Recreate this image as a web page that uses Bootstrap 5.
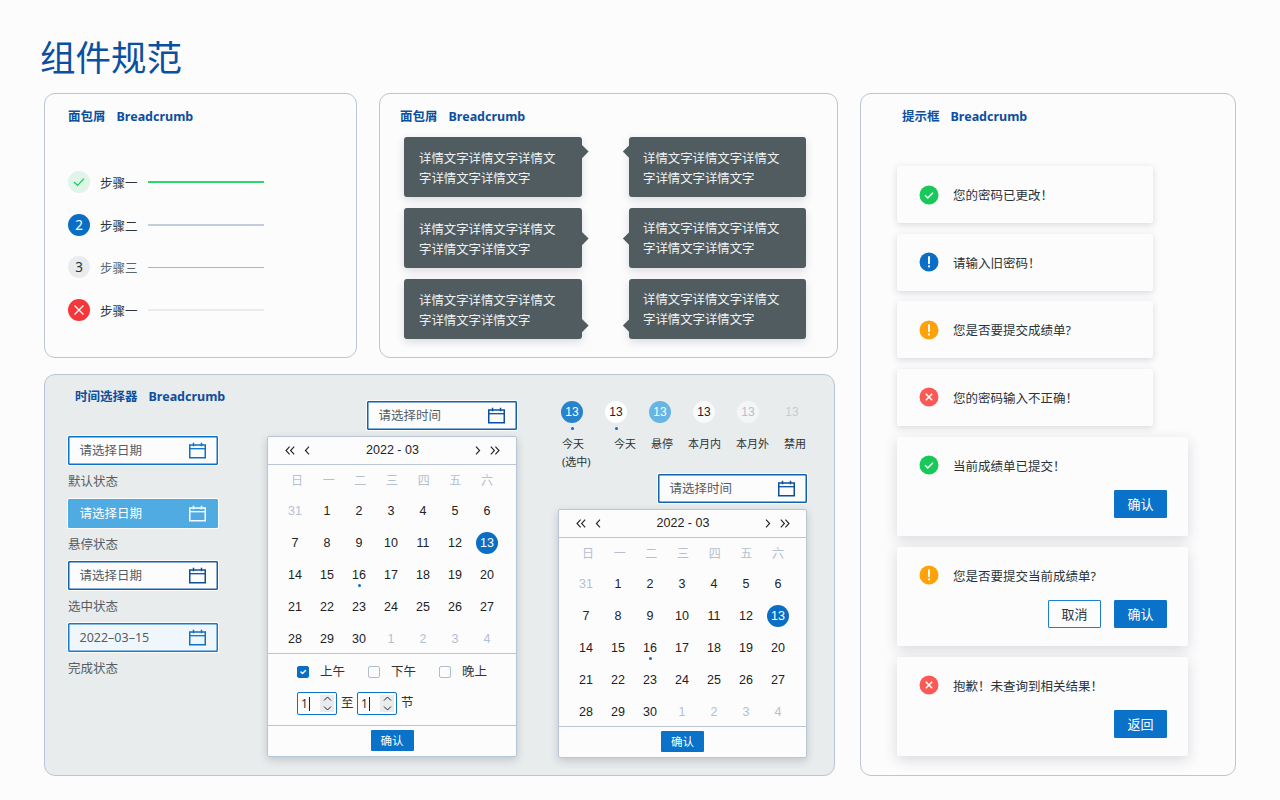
<!DOCTYPE html>
<html lang="zh-CN">
<head>
<meta charset="utf-8">
<title>组件规范</title>
<link href="https://cdn.jsdelivr.net/npm/bootstrap@5.3.0/dist/css/bootstrap.min.css" rel="stylesheet">
<style>
html,body{height:800px;overflow:hidden}
body{background:#fcfcfd;font-family:"Noto Sans","Noto Sans CJK SC",sans-serif;color:#2b3338;font-size:12.5px;width:1280px}
.page-wrap{padding:32px 0 0 44px}
.page-title{font-size:35.5px;font-weight:400;line-height:50px;color:#0b509e;margin:0 0 11px -4px}
.spec-card{border:1px solid #b8c6d8;border-radius:11px;background:#fcfcfd}
.left-side{width:794px;margin-right:22px}
.c-steps{width:313px;height:265px;padding:13px 0 0 23px;margin-right:22px}
.c-tips{width:459px;height:265px;padding:13px 0 0 20px}
.c-date{width:791px;height:402px;margin-top:16px;background:#e9eced;padding:0 0 0 23px}
.c-msg{width:376px;height:683px;padding:13px 0 0 36px}
.sec-title{font-size:12.5px;font-weight:700;line-height:20px;color:#0b4f9e;white-space:nowrap}
.sec-title span{margin-right:11px}
.step-list{margin-top:33.67px}
.step-row{height:42.67px;display:flex;align-items:center}
.step-dot{width:22px;height:22px;border-radius:50%;display:flex;align-items:center;justify-content:center;font-size:13.5px;margin-right:10px;flex:none}
.dot-done{background:#dff5e8}
.dot-now{background:#0a6fc4;color:#fff}
.dot-wait{background:#e9ecee}
.dot-fail{background:#f5373c}
.step-name{width:38px;margin-right:10px;line-height:22px;white-space:nowrap;padding-top:4px}
.name-wait{color:#5a666c}
.step-line{width:116px;height:2px}
.line-done{background:#2bd66c}
.line-now{background:#c2cedc}
.line-wait{background:#aab6c2;height:1px}
.line-fail{background:#e8ebef}
.tip-grid{display:grid;grid-template-columns:178px 177px;column-gap:47px;row-gap:11px;margin:10px 0 0 4px}
.tip-box{position:relative;height:60px;background:#505c60;color:#eef1f2;border-radius:3px;padding:11.5px 15px 0;line-height:20px;font-size:12.4px;box-shadow:0 3px 8px rgba(40,50,60,.16)}
.tip-box::after{content:"";position:absolute;width:8.5px;height:8.5px;background:#505c60;transform:rotate(45deg)}
.arr-r::after{right:-4.5px}
.arr-l{padding-left:14px}
.arr-l.arr-b,.arr-l.arr-c{padding-top:10.5px}
.arr-l::after{left:-4.5px}
.arr-a::after{top:10px}
.arr-b::after{top:26px}
.arr-c::after{top:42px}
.col-a{width:150px;margin-right:49px;padding-top:12px}
.col-b{width:250px;margin-right:41px;padding-top:26px}
.col-c{width:249px;padding-top:26px}
.date-head{margin:0 0 29px 7px}
.date-in{--bd:#0a72c8;height:29px;width:150px;border:1px solid var(--bd);box-shadow:inset 0 0 0 .5px var(--bd),0 0 0 1px rgba(255,255,255,.85);background:#fcfcfd;display:flex;align-items:center;justify-content:space-between;padding:1px 11.5px 0 10.5px;color:#555e64;border-radius:1px}
.date-in svg{flex:none;margin-top:-1px}
.in-hover{--bd:#4fabe2;background:#4fabe2;color:#fff}
.in-sel{--bd:#1262ab}
.in-done{--bd:#1a79c9;background:#f0f7fc}
.in-cap{height:33px;line-height:33px;color:#555e64}
.in-cap-tall{height:34px}
.w-narrow{width:149px}
.cal-panel{background:#fcfcfd;border:1px solid #b9c6d6;border-radius:2px;box-shadow:0 3px 8px rgba(40,50,60,.2);margin-top:6px}
.cal-head{height:28px;border-bottom:1px solid #b9c6d6;display:flex;align-items:center;padding:0 16px 0 17px;color:#222;font-size:12.5px}
.cal-head .cal-ym{flex:1;text-align:center;font-family:"Liberation Sans",sans-serif;font-size:12.5px}
.cal-head svg{flex:none}
.nav-gap{margin-right:9px}
.nav-gap2{margin-left:9px}
.cal-week{display:grid;grid-template-columns:repeat(7,31.67px);height:30px;padding-left:13.2px;color:#b4c1cf;font-family:"Noto Sans CJK SC",sans-serif;font-size:12px}
.cal-week>div{display:flex;align-items:center;justify-content:center}
.cal-days{display:grid;grid-template-columns:repeat(7,32px);grid-auto-rows:32px;padding:0 0 0 11px;height:158px}
.cal-days>div{display:flex;align-items:center;justify-content:center;position:relative;font-family:"Liberation Sans","Noto Sans CJK SC",sans-serif;font-size:12.5px;color:#222;padding-top:1px}
.cal-days>.off{color:#b4c1cf}
.cal-days>.cur{color:#fff}
.cal-days>.cur::before{content:"";position:absolute;left:5px;top:5px;width:22px;height:22px;border-radius:50%;background:#0a6fc4;z-index:0}
.cal-days>.cur span{position:relative}
.mark-dot::after{content:"";position:absolute;left:14.5px;top:25px;width:3px;height:3px;border-radius:50%;background:#0a6fc4}
.cal-time{border-top:1px solid #b9c6d6;height:72px;padding:0 0 0 29px}
.time-opts{height:36px;display:flex;align-items:center}
.time-opts .form-check-input{width:12px;height:12px;margin:0 11px 0 0;border:1.5px solid #aebccb;border-radius:2px;background-color:#fcfcfd;flex:none}
.time-opts .form-check-input:checked{background-color:#0a6fc4;border-color:#0a6fc4}
.time-opts label{width:48px;color:#333}
.time-range{display:flex;align-items:center;color:#333;margin-top:2px;height:23px}
.spin{width:40px;height:23px;border:1px solid #0a72c8;border-radius:2px;background:#fcfcfd;display:flex;align-items:center;justify-content:space-between;padding:0 2px 0 3px;font-size:12px}
.spin-txt{border-right:1px solid #222;line-height:13px;padding-right:1px;height:14px;display:block}
.spin-btn{width:14px;height:17px;background:#e9ecee;display:flex;flex-direction:column;align-items:center;justify-content:space-between;padding:1px 0}
.range-word{margin:0 4px;width:12px;white-space:nowrap}
.cal-foot{border-top:1px solid #b9c6d6;height:31px;display:flex;align-items:center;justify-content:center;padding-bottom:1px}
.btn-mini{width:43px;height:21px;padding:0;background:#0a72c8;border:0;border-radius:1px;color:#fff;font-size:11.5px;line-height:21px}
.state-dots{display:flex;margin-left:3px}
.state-dots>div{width:22px;height:22px;margin-right:22px;border-radius:50%;display:flex;align-items:center;justify-content:center;font-family:"Liberation Sans",sans-serif;font-size:12px;position:relative;flex:none}
.sd-today{background:#2683cc;color:#fff}
.sd-white{background:#fff;color:#222}
.sd-hover{background:#67b5e3;color:#fff}
.sd-in{background:#f8f9fa;color:#222}
.sd-out{background:#f3f5f6;color:#b4c1cf}
.sd-off{color:#c2cdd8}
.has-dot::after{content:"";position:absolute;left:9.5px;top:26px;width:3px;height:3px;border-radius:50%;background:#1762e0}
.state-names{display:flex;margin:12px 0 0 4px;line-height:18px;font-size:11px;gap:15px;color:#2b3338;height:35px;white-space:nowrap}
.sn-w{width:37px}
.input-right{margin-left:auto}
.mt-4px{margin-top:4px}
.toast-box{background:#fcfcfd;border-radius:2px;padding:0 0 0 22px;color:#2b3338;font-size:12.5px;margin-bottom:10.67px}
.t-s{width:256px;height:57px;display:flex;align-items:center;box-shadow:0 2px 7px rgba(40,50,60,.17)}
.t-w{width:291px;height:99px;box-shadow:0 4px 14px rgba(40,50,60,.17);padding-top:18px;margin-bottom:11px}
.t-row{display:flex;align-items:center;height:20px}
.t-txt{padding-top:4px}
.t-w .t-txt{padding-top:5px}
.toast-box svg{flex:none;margin-right:14px}
.msg-list{margin-top:39px}
.msg-head{margin-left:5px}
.t-acts{display:flex;justify-content:flex-end;gap:13px;margin:15px 21px 0 0}
.btn-act{width:53px;height:28px;padding:0;font-size:13px;line-height:26px;border-radius:1px;background:#0a72c8;color:#fff;border:1px solid #0a72c8}
.btn-ghost{background:#fcfcfd;color:#2b3338;border-color:#1c80cf}
.ic-blue{color:#0a72c8}
.ic-navy{color:#0b4f9e}
</style>
</head>
<body>
<svg width="0" height="0" class="d-block position-absolute">
  <defs>
    <symbol id="ic-cal" viewBox="0 0 17 17">
      <path d="M.75 3h15.5v12.75H.75z" fill="none" stroke="currentColor" stroke-width="1.5"/>
      <path d="M1 6.7h15" stroke="currentColor" stroke-width="1.3"/>
      <path d="M4.5.8v3.4M12.5.8v3.4" stroke="currentColor" stroke-width="1.5"/>
    </symbol>
    <symbol id="ic-ok" viewBox="0 0 20 20"><circle cx="10" cy="10" r="9.5" fill="#18c95a"/><path d="M6 10.3l2.8 2.7L14 7.8" fill="none" stroke="#fff" stroke-width="1.5"/></symbol>
    <symbol id="ic-info" viewBox="0 0 20 20"><circle cx="10" cy="10" r="9.5" fill="#0a6fc4"/><path d="M10 5v6.3" stroke="#fff" stroke-width="1.9" stroke-linecap="round"/><circle cx="10" cy="14.4" r="1.1" fill="#fff"/></symbol>
    <symbol id="ic-warn" viewBox="0 0 20 20"><circle cx="10" cy="10" r="9.5" fill="#ffa20a"/><path d="M10 5v6.3" stroke="#fff" stroke-width="1.9" stroke-linecap="round"/><circle cx="10" cy="14.4" r="1.1" fill="#fff"/></symbol>
    <symbol id="ic-err" viewBox="0 0 20 20"><circle cx="10" cy="10" r="9.5" fill="#f95a55"/><path d="M6.8 6.8l6.4 6.4M13.2 6.8l-6.4 6.4" stroke="#fff" stroke-width="1.5"/></symbol>
    <symbol id="ic-l2" viewBox="0 0 10 9"><path d="M4.6.7L1 4.5l3.6 3.8M9.2.7L5.6 4.5l3.6 3.8" fill="none" stroke="currentColor" stroke-width="1.1"/></symbol>
    <symbol id="ic-l1" viewBox="0 0 6 9"><path d="M5 .7L1.4 4.5 5 8.3" fill="none" stroke="currentColor" stroke-width="1.1"/></symbol>
    <symbol id="ic-r1" viewBox="0 0 6 9"><path d="M1 .7l3.6 3.8L1 8.3" fill="none" stroke="currentColor" stroke-width="1.1"/></symbol>
    <symbol id="ic-r2" viewBox="0 0 10 9"><path d="M.8.7l3.6 3.8L.8 8.3M5.4.7L9 4.5 5.4 8.3" fill="none" stroke="currentColor" stroke-width="1.1"/></symbol>
    <symbol id="ic-up" viewBox="0 0 9 5"><path d="M1 4.5L4.5 1 8 4.5" fill="none" stroke="#222" stroke-width="1"/></symbol>
    <symbol id="ic-dn" viewBox="0 0 9 5"><path d="M1 .5L4.5 4 8 .5" fill="none" stroke="#222" stroke-width="1"/></symbol>
  </defs>
</svg>

<div class="page-wrap">
  <h1 class="page-title">组件规范</h1>
  <div class="d-flex align-items-start">
    <div class="left-side">
      <div class="d-flex">
        <section class="spec-card c-steps">
          <div class="sec-title"><span>面包屑</span>Breadcrumb</div>
          <div class="step-list">
            <div class="step-row">
              <div class="step-dot dot-done"><svg width="12" height="10" viewBox="0 0 12 10"><path d="M1 5l3.6 3.4L11 1.6" fill="none" stroke="#18c95a" stroke-width="1.2"/></svg></div>
              <div class="step-name">步骤一</div><div class="step-line line-done"></div>
            </div>
            <div class="step-row">
              <div class="step-dot dot-now">2</div>
              <div class="step-name">步骤二</div><div class="step-line line-now"></div>
            </div>
            <div class="step-row">
              <div class="step-dot dot-wait">3</div>
              <div class="step-name name-wait">步骤三</div><div class="step-line line-wait"></div>
            </div>
            <div class="step-row">
              <div class="step-dot dot-fail"><svg width="12" height="12" viewBox="0 0 12 12"><path d="M1.5 1.5l9 9M10.5 1.5l-9 9" stroke="#fff" stroke-width="1.3"/></svg></div>
              <div class="step-name">步骤一</div><div class="step-line line-fail"></div>
            </div>
          </div>
        </section>
        <section class="spec-card c-tips">
          <div class="sec-title"><span>面包屑</span>Breadcrumb</div>
          <div class="tip-grid">
            <div class="tip-box arr-r arr-a">详情文字详情文字详情文字详情文字详情文字</div>
            <div class="tip-box arr-l arr-a">详情文字详情文字详情文字详情文字详情文字</div>
            <div class="tip-box arr-r arr-b">详情文字详情文字详情文字详情文字详情文字</div>
            <div class="tip-box arr-l arr-b">详情文字详情文字详情文字详情文字详情文字</div>
            <div class="tip-box arr-r arr-c">详情文字详情文字详情文字详情文字详情文字</div>
            <div class="tip-box arr-l arr-c">详情文字详情文字详情文字详情文字详情文字</div>
          </div>
        </section>
      </div>

      <section class="spec-card c-date d-flex align-items-start">
        <div class="col-a">
          <div class="sec-title date-head"><span>时间选择器</span>Breadcrumb</div>
          <div class="date-in"><span>请选择日期</span><svg class="ic-blue" width="17" height="17"><use href="#ic-cal"/></svg></div>
          <div class="in-cap in-cap-tall">默认状态</div>
          <div class="date-in in-hover"><span>请选择日期</span><svg width="17" height="17"><use href="#ic-cal"/></svg></div>
          <div class="in-cap">悬停状态</div>
          <div class="date-in in-sel"><span>请选择日期</span><svg class="ic-navy" width="17" height="17"><use href="#ic-cal"/></svg></div>
          <div class="in-cap">选中状态</div>
          <div class="date-in in-done"><span>2022–03–15</span><svg class="ic-blue" width="17" height="17"><use href="#ic-cal"/></svg></div>
          <div class="in-cap">完成状态</div>
        </div>

        <div class="col-b">
          <div class="date-in in-sel input-right"><span>请选择时间</span><svg class="ic-navy" width="17" height="17"><use href="#ic-cal"/></svg></div>
          <div class="cal-panel">
            <div class="cal-head">
              <svg class="nav-gap" width="10" height="9"><use href="#ic-l2"/></svg><svg width="6" height="9"><use href="#ic-l1"/></svg>
              <div class="cal-ym">2022 - 03</div>
              <svg width="6" height="9"><use href="#ic-r1"/></svg><svg class="nav-gap2" width="10" height="9"><use href="#ic-r2"/></svg>
            </div>
            <div class="cal-week"><div>日</div><div>一</div><div>二</div><div>三</div><div>四</div><div>五</div><div>六</div></div>
            <div class="cal-days">
              <div class="off">31</div><div>1</div><div>2</div><div>3</div><div>4</div><div>5</div><div>6</div>
              <div>7</div><div>8</div><div>9</div><div>10</div><div>11</div><div>12</div><div class="cur"><span>13</span></div>
              <div>14</div><div>15</div><div class="mark-dot">16</div><div>17</div><div>18</div><div>19</div><div>20</div>
              <div>21</div><div>22</div><div>23</div><div>24</div><div>25</div><div>26</div><div>27</div>
              <div>28</div><div>29</div><div>30</div><div class="off">1</div><div class="off">2</div><div class="off">3</div><div class="off">4</div>
            </div>
            <div class="cal-time">
              <div class="time-opts">
                <input class="form-check-input" type="checkbox" checked id="am"><label for="am">上午</label>
                <input class="form-check-input" type="checkbox" id="pm"><label for="pm">下午</label>
                <input class="form-check-input" type="checkbox" id="eve"><label for="eve">晚上</label>
              </div>
              <div class="time-range">
                <div class="spin"><span class="spin-txt">1</span><span class="spin-btn"><svg width="9" height="5"><use href="#ic-up"/></svg><svg width="9" height="5"><use href="#ic-dn"/></svg></span></div>
                <span class="range-word">至</span>
                <div class="spin"><span class="spin-txt">1</span><span class="spin-btn"><svg width="9" height="5"><use href="#ic-up"/></svg><svg width="9" height="5"><use href="#ic-dn"/></svg></span></div>
                <span class="range-word">节</span>
              </div>
            </div>
            <div class="cal-foot"><button class="btn btn-mini" type="button">确认</button></div>
          </div>
        </div>

        <div class="col-c">
          <div class="state-dots">
            <div class="sd-today has-dot">13</div>
            <div class="sd-white has-dot">13</div>
            <div class="sd-hover">13</div>
            <div class="sd-in">13</div>
            <div class="sd-out">13</div>
            <div class="sd-off">13</div>
          </div>
          <div class="state-names">
            <div class="sn-w">今天<br>(选中)</div>
            <div>今天</div><div>悬停</div><div>本月内</div><div>本月外</div><div>禁用</div>
          </div>
          <div class="date-in in-sel input-right mt-4px w-narrow"><span>请选择时间</span><svg class="ic-navy" width="17" height="17"><use href="#ic-cal"/></svg></div>
          <div class="cal-panel">
            <div class="cal-head">
              <svg class="nav-gap" width="10" height="9"><use href="#ic-l2"/></svg><svg width="6" height="9"><use href="#ic-l1"/></svg>
              <div class="cal-ym">2022 - 03</div>
              <svg width="6" height="9"><use href="#ic-r1"/></svg><svg class="nav-gap2" width="10" height="9"><use href="#ic-r2"/></svg>
            </div>
            <div class="cal-week"><div>日</div><div>一</div><div>二</div><div>三</div><div>四</div><div>五</div><div>六</div></div>
            <div class="cal-days">
              <div class="off">31</div><div>1</div><div>2</div><div>3</div><div>4</div><div>5</div><div>6</div>
              <div>7</div><div>8</div><div>9</div><div>10</div><div>11</div><div>12</div><div class="cur"><span>13</span></div>
              <div>14</div><div>15</div><div class="mark-dot">16</div><div>17</div><div>18</div><div>19</div><div>20</div>
              <div>21</div><div>22</div><div>23</div><div>24</div><div>25</div><div>26</div><div>27</div>
              <div>28</div><div>29</div><div>30</div><div class="off">1</div><div class="off">2</div><div class="off">3</div><div class="off">4</div>
            </div>
            <div class="cal-foot"><button class="btn btn-mini" type="button">确认</button></div>
          </div>
        </div>
      </section>
    </div>

    <section class="spec-card c-msg">
      <div class="sec-title msg-head"><span>提示框</span>Breadcrumb</div>
      <div class="msg-list">
        <div class="toast-box t-s"><svg width="20" height="20"><use href="#ic-ok"/></svg><span class="t-txt">您的密码已更改！</span></div>
        <div class="toast-box t-s"><svg width="20" height="20"><use href="#ic-info"/></svg><span class="t-txt">请输入旧密码！</span></div>
        <div class="toast-box t-s"><svg width="20" height="20"><use href="#ic-warn"/></svg><span class="t-txt">您是否要提交成绩单?</span></div>
        <div class="toast-box t-s"><svg width="20" height="20"><use href="#ic-err"/></svg><span class="t-txt">您的密码输入不正确！</span></div>
        <div class="toast-box t-w">
          <div class="t-row"><svg width="20" height="20"><use href="#ic-ok"/></svg><span class="t-txt">当前成绩单已提交！</span></div>
          <div class="t-acts"><button class="btn btn-act" type="button">确认</button></div>
        </div>
        <div class="toast-box t-w">
          <div class="t-row"><svg width="20" height="20"><use href="#ic-warn"/></svg><span class="t-txt">您是否要提交当前成绩单?</span></div>
          <div class="t-acts"><button class="btn btn-act btn-ghost" type="button">取消</button><button class="btn btn-act" type="button">确认</button></div>
        </div>
        <div class="toast-box t-w">
          <div class="t-row"><svg width="20" height="20"><use href="#ic-err"/></svg><span class="t-txt">抱歉！未查询到相关结果！</span></div>
          <div class="t-acts"><button class="btn btn-act" type="button">返回</button></div>
        </div>
      </div>
    </section>
  </div>
</div>
<script src="https://cdn.jsdelivr.net/npm/bootstrap@5.3.0/dist/js/bootstrap.bundle.min.js"></script>
</body>
</html>
